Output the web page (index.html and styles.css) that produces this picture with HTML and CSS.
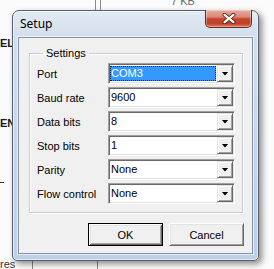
FILE: index.html
```html
<!DOCTYPE html>
<html lang="en">
<head>
  <meta charset="UTF-8">
  <title>Setup</title>
  <link rel="stylesheet" href="styles.css">
</head>
<body>
  <div class="desktop">
    <span class="bg-text bg-el">EL</span>
    <span class="bg-text bg-en">EN</span>
    <span class="bg-size">7 KB</span>
    <span class="bg-res">res</span>
    <span class="bg-line line-a"></span>
    <span class="bg-line line-b"></span>
    <span class="bg-line line-c"></span>
    <span class="bg-line line-d"></span>
    <span class="bg-dash"></span>

    <div class="window">
      <div class="titlebar">
        <span class="title">Setup</span>
        <button class="close" aria-label="Close">
          <svg width="14" height="11" viewBox="0 0 14 11">
            <path d="M2.5 1.8 L11.5 9.2 M11.5 1.8 L2.5 9.2" stroke="#5a2219" stroke-width="4" stroke-linecap="round" fill="none"/>
            <path d="M2.5 1.8 L11.5 9.2 M11.5 1.8 L2.5 9.2" stroke="#fff" stroke-width="2.2" stroke-linecap="round" fill="none"/>
          </svg>
        </button>
      </div>

      <div class="client">
        <fieldset class="group">
          <legend>Settings</legend>
          <div class="rows">
            <label>Port</label>
            <div class="combo"><span class="value selected">COM3</span><span class="drop"></span></div>

            <label>Baud rate</label>
            <div class="combo"><span class="value">9600</span><span class="drop"></span></div>

            <label>Data bits</label>
            <div class="combo"><span class="value">8</span><span class="drop"></span></div>

            <label>Stop bits</label>
            <div class="combo"><span class="value">1</span><span class="drop"></span></div>

            <label>Parity</label>
            <div class="combo"><span class="value">None</span><span class="drop"></span></div>

            <label>Flow control</label>
            <div class="combo"><span class="value">None</span><span class="drop"></span></div>
          </div>
        </fieldset>

        <div class="buttons">
          <button class="btn default">OK</button>
          <button class="btn">Cancel</button>
        </div>
      </div>
    </div>
  </div>
</body>
</html>
```

FILE: styles.css
```css
body {
  margin: 0;
  background: #fbfbfb;
  font-family: "Liberation Sans", Arial, sans-serif;
  font-size: 11px;
  color: #000;
}

.desktop {
  position: relative;
  width: 274px;
  height: 269px;
  overflow: hidden;
}

/* stuff behind the dialog */
.bg-text {
  position: absolute;
  left: 0;
  font-weight: bold;
  font-size: 11px;
  color: #1a1a1a;
}

.bg-el { top: 37px; }
.bg-en { top: 117px; }

.bg-size {
  position: absolute;
  left: 171px;
  top: -5px;
  color: #6a6a6a;
}

.bg-res {
  position: absolute;
  left: 0;
  top: 258px;
  color: #333;
}

.bg-line {
  position: absolute;
  width: 1px;
  background: #8a8a8a;
}

.line-a { left: 95px; top: 0; height: 12px; }
.line-b { left: 100px; top: 0; height: 12px; }
.line-c { left: 32px; top: 256px; height: 13px; }
.line-d { left: 97px; top: 256px; height: 13px; }

.bg-dash {
  position: absolute;
  left: 0;
  top: 182px;
  width: 4px;
  height: 1px;
  background: #333;
}

/* dialog */
.window {
  position: absolute;
  left: 12px;
  top: 10px;
  width: 247px;
  height: 251px;
  box-sizing: border-box;
  border: 1px solid #56616f;
  border-radius: 7px 7px 5px 5px;
  background: linear-gradient(#e3ebf4, #d2deeb 26px, #c4d5e8 60%, #bcd0e6);
  box-shadow: 3px 3px 6px rgba(0, 0, 0, 0.45), inset 0 0 0 1px rgba(255, 255, 255, 0.55);
  padding: 0 5px 6px 5px;
  display: flex;
  flex-direction: column;
}

.titlebar {
  height: 26px;
  display: flex;
  justify-content: space-between;
  align-items: flex-start;
}

.title {
  font-family: "Noto Sans", "Open Sans", sans-serif;
  font-size: 12px;
  line-height: 16px;
  padding: 5px 0 0 2px;
  color: #000;
}

.close {
  margin: -1px 1px 0 0;
  width: 47px;
  height: 18px;
  padding: 0;
  border: 1px solid #6b2a22;
  border-top: none;
  border-radius: 0 0 5px 5px;
  background: linear-gradient(#e9aa9b, #d98a79 40%, #c5472f 52%, #c13e27 78%, #d8775b);
  box-shadow: inset 0 0 0 1px rgba(255, 255, 255, 0.35);
  display: flex;
  justify-content: center;
  align-items: center;
}

.client {
  flex: 1;
  border: 1px solid #8393a6;
  background: #f0f0f0;
  box-shadow: 0 0 0 1px rgba(255, 255, 255, 0.6);
  padding-top: 9px;
  display: flex;
  flex-direction: column;
}

.group {
  margin: 0 9px 0 10px;
  padding: 3px 7px 8px 7px;
  border: 1px solid #c9ccd0;
  box-shadow: inset 1px 1px 0 #fff, 1px 1px 0 #fff;
  min-width: 0;
}

.group legend {
  margin-left: 6px;
  padding: 0 3px;
  line-height: 13px;
}

.rows {
  display: grid;
  grid-template-columns: 71px 127px;
  grid-auto-rows: 21px;
  row-gap: 3px;
  align-items: center;
}

.combo {
  display: flex;
  height: 21px;
  box-sizing: border-box;
  border: 1px solid;
  border-color: #a0a0a0 #fff #fff #a0a0a0;
  box-shadow: inset 1px 1px 0 #696969, inset -1px -1px 0 #e3e3e3;
  background: #fff;
  padding: 1px;
}

.value {
  flex: 1;
  line-height: 17px;
  padding-left: 1px;
}

.value.selected {
  margin: 1px 1px 1px 0;
  line-height: 15px;
  background: #3399ff;
  color: #fff;
  outline: 1px dotted #1b1b1b;
  outline-offset: -1px;
}

.drop {
  width: 16px;
  height: 17px;
  box-sizing: border-box;
  border: 1px solid;
  border-color: #e3e3e3 #696969 #696969 #e3e3e3;
  box-shadow: inset 1px 1px 0 #fff, inset -1px -1px 0 #a0a0a0;
  background: #f0f0f0;
  display: flex;
  justify-content: center;
  align-items: center;
}

.drop::after {
  content: "";
  width: 7px;
  height: 4px;
  background: #000;
  clip-path: polygon(0 0, 100% 0, 50% 100%);
}

.buttons {
  display: flex;
  justify-content: flex-end;
  gap: 6px;
  margin-top: 10px;
  padding-right: 8px;
}

.btn {
  width: 75px;
  height: 23px;
  padding: 0;
  font-family: "Liberation Sans", Arial, sans-serif;
  font-size: 11px;
  color: #000;
  background: #f0f0f0;
  border: 1px solid;
  border-color: #fff #696969 #696969 #fff;
  box-shadow: inset 1px 1px 0 #e3e3e3, inset -1px -1px 0 #a0a0a0;
}

.btn.default {
  border-color: #000;
  box-shadow: inset 1px 1px 0 #fff, inset -1px -1px 0 #696969, inset 2px 2px 0 #e3e3e3, inset -2px -2px 0 #a0a0a0;
}
```
